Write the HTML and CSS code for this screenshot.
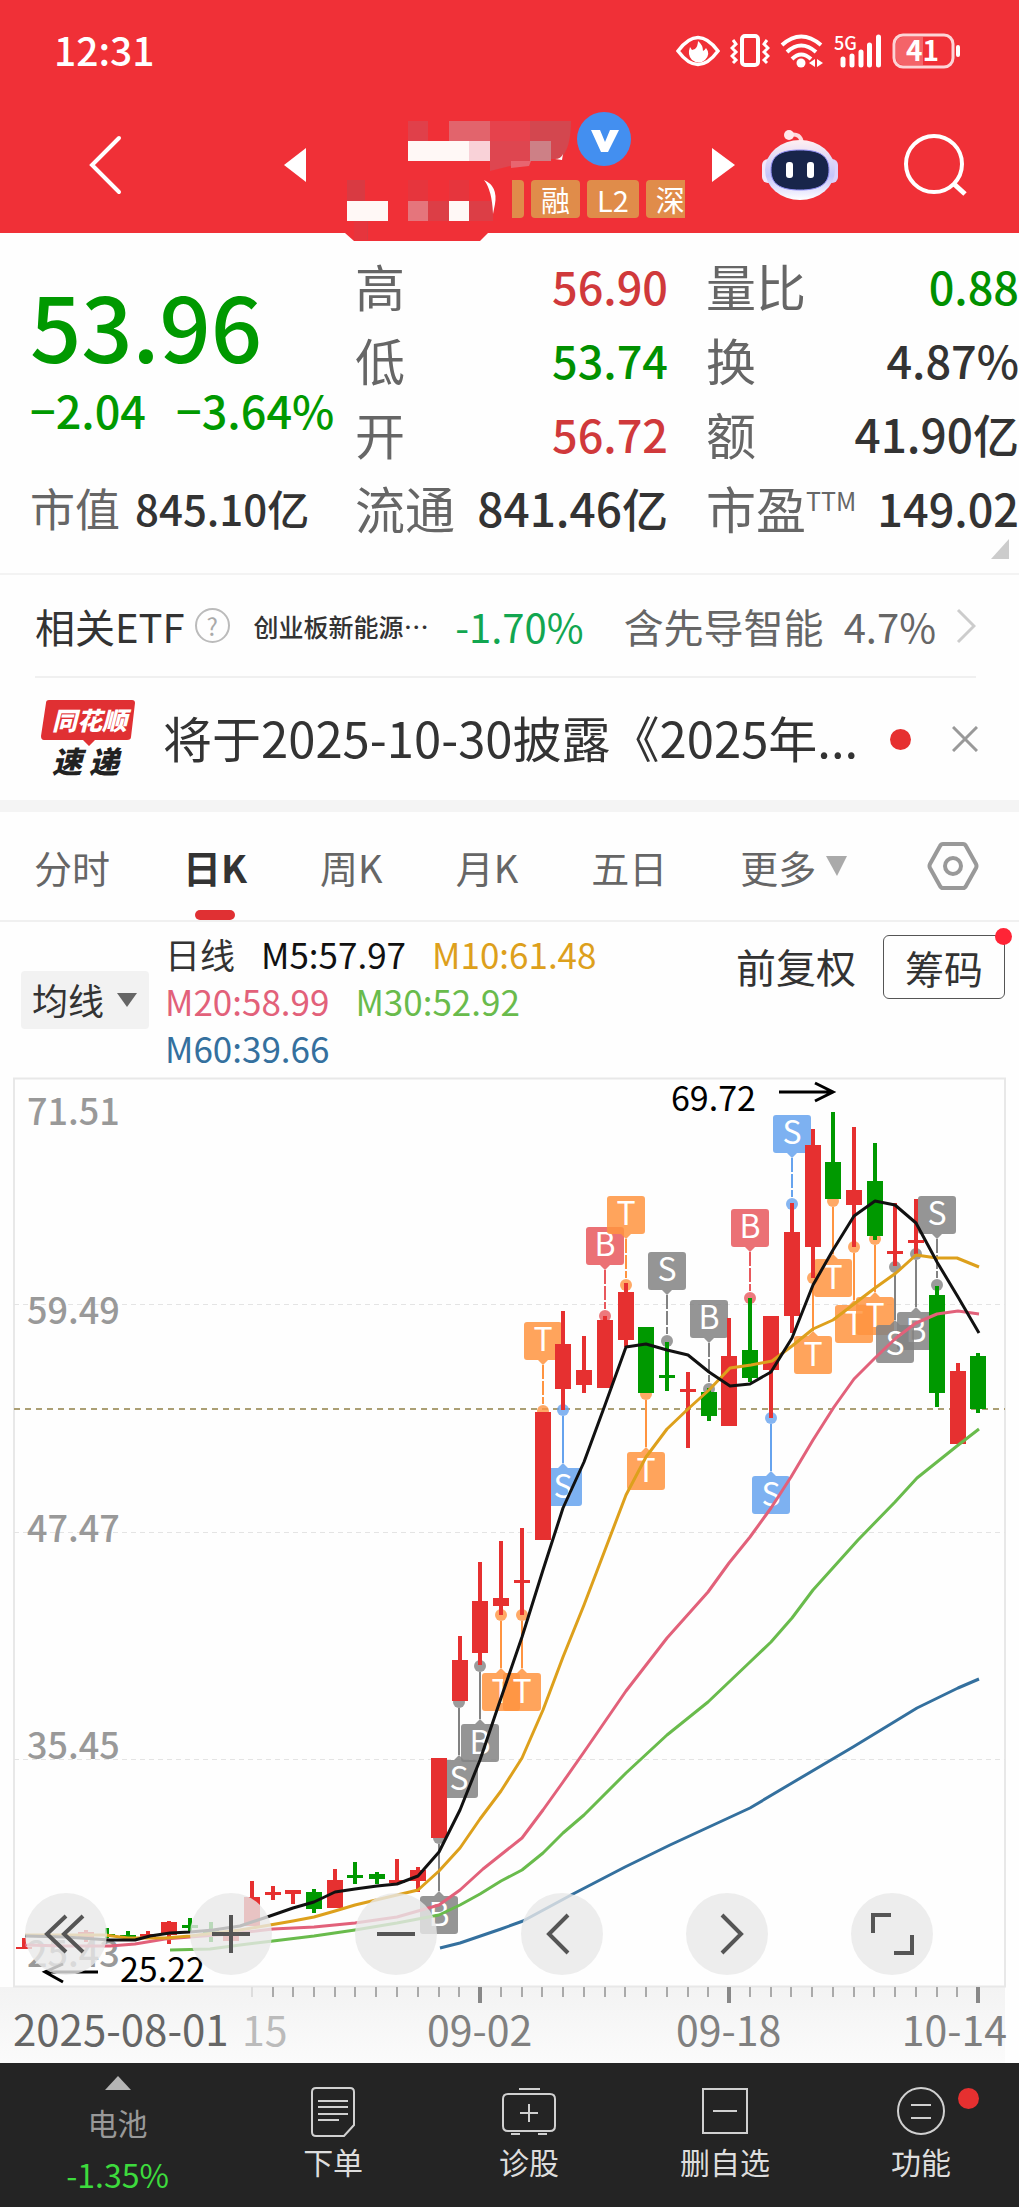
FILE: index.html
```html
<!DOCTYPE html>
<html lang="zh-CN">
<head>
<meta charset="utf-8">
<meta name="viewport" content="width=device-width, initial-scale=1">
<title>个股行情</title>
<link rel="stylesheet" href="styles.css">
</head>
<body>
<header class="header">
  <div class="status">
    <time class="status-time">12:31</time>
    <div class="status-icons">
      <svg width="44" height="36" viewBox="0 0 44 36"><path d="M2 18Q22-9 42 18Q22 45 2 18Z" fill="none" stroke="#fff" stroke-width="3.5"/><path d="M22 8q0 5-3 8l-3 1-2-3q-3 8 2 13 7 5 13 0 6-6 1-12-1 2-3 3 0-6-5-10z" fill="#fff"/></svg>
      <svg width="40" height="36" viewBox="0 0 40 36"><rect x="12" y="3" width="16" height="29" rx="3" fill="none" stroke="#fff" stroke-width="4"/><path d="M3 7l3 4-4 4 4 4-4 4 4 4-3 3M37 7l-3 4 4 4-4 4 4 4-4 4 3 3" fill="none" stroke="#fff" stroke-width="3"/></svg>
      <svg width="44" height="36" viewBox="0 0 44 36"><g fill="none" stroke="#fff" stroke-width="4"><path d="M2 12Q21-5 41 12"/><path d="M7 19Q21 6 36 19"/><path d="M12 26Q21 17 31 26"/></g><circle cx="21" cy="30" r="4.500" fill="#fff"/><path d="M35 26v8l-6-4zM37 26v8l6-4z" fill="#fff"/></svg>
      <svg class="signal" width="48" height="36" viewBox="0 0 48 36"><text class="net" x="0" y="17">5G</text><path d="M9 26v6M18 23v9M27 19v13M35.500 12v20M44.500 4v28" fill="none" stroke="#fff" stroke-width="5" stroke-linecap="round"/></svg>
      <svg width="70" height="36" viewBox="0 0 70 36"><rect x="2" y="2" width="59" height="32" rx="9" fill="none" stroke="#fff" stroke-opacity=".8" stroke-width="3"/><path d="M11 4h20v28H11q-7 0-7-7V11q0-7 7-7z" fill="#fff" opacity=".25"/><path d="M66 14v8" stroke="#fff" stroke-width="4" stroke-linecap="round"/><text class="battery" x="14" y="28">41</text></svg>
    </div>
  </div>
  <nav class="nav">
    <button class="icon-btn" aria-label="返回"><svg width="34" height="60" viewBox="0 0 34 60"><path d="M31 3L4 30l27 27" fill="none" stroke="#fff" stroke-width="4" stroke-linecap="round"/></svg></button>
    <button class="icon-btn prev" aria-label="上一只"><svg width="22" height="34" viewBox="0 0 22 34"><path d="M22 0v34L0 17z" fill="#fff"/></svg></button>
    <div class="stock">
      <div class="stock-name">
        <svg width="164" height="60" viewBox="408 112 164 60"><path fill="#e0404a" d="M408 121h20v20h-20z"/><path fill="#e2646c" d="M449 121h41v20h-41z"/><path fill="#e6424c" d="M490 121h40v20h-40z"/><path fill="#d3474f" d="M530 121h41q0 28-11 38h-30z"/><path fill="#fff8f6" d="M408 141h61v20h-61z"/><path fill="#f9d2d8" d="M469 141h21v20h-21z"/><path fill="#de4650" d="M490 141h40v20l-40 10z"/><path fill="#cd8086" d="M530 141h21v20h-21z"/><path fill="#e86570" d="M511 161h20l-2 5-18 2z"/><path fill="#fff" d="M555 159q6 0 8-5l-1 6z"/></svg>
        <svg width="54" height="54" viewBox="0 0 54 54"><circle cx="27" cy="27" r="27" fill="#438ff0"/><path d="M14 18h9l5 12 5-12h9L31 40h-7z" fill="#fff"/></svg>
      </div>
      <div class="stock-code">
        <svg class="code-mask" width="152" height="38" viewBox="345 180 152 38"><path fill="#f03037" d="M345 232v1l9 8h126l8-8v-1z"/><path fill="#d93a42" d="M347 180h18v21h-18zM365 221h3v19h-3z"/><path fill="#e6353d" d="M408 180h20v21h-20zM449 180h20v21h-20zM354 221h13v19h-13z"/><path fill="#fff8f6" d="M347 201h41v20h-41zM449 201h20v20h-20z"/><path fill="#e5757c" d="M408 201h20v20h-20z"/><path fill="#dc3e46" d="M428 201h21v20h-21zM469 201h24v20h-24z"/><path fill="#fff" d="M484 180q14 6 11 24l-2 10q-1-24-9-34z"/></svg>
        <ul class="tags"><li class="tag tag-cut"></li><li class="tag">融</li><li class="tag">L2</li><li class="tag">深</li></ul>
      </div>
    </div>
    <button class="icon-btn next" aria-label="下一只"><svg width="23" height="34" viewBox="0 0 23 34"><path d="M0 0v34l23-17z" fill="#fff"/></svg></button>
    <button class="icon-btn robot" aria-label="智能助手"><svg width="78" height="72" viewBox="0 0 78 72">
      <defs><linearGradient id="shell" x1="0" y1="0" x2="0" y2="1"><stop offset="0" stop-color="#fff0f2"/><stop offset=".6" stop-color="#c5c4fa"/><stop offset="1" stop-color="#fff"/></linearGradient></defs>
      <path d="M28 6q12-3 13 9" fill="none" stroke="#ffd9dd" stroke-width="4"/><circle cx="28" cy="6" r="5" fill="#ffe9ec"/>
      <rect x="1" y="30" width="12" height="24" rx="6" fill="#f3e8fb"/><rect x="65" y="30" width="12" height="24" rx="6" fill="#dcd2fb"/>
      <ellipse cx="39" cy="41" rx="35" ry="30" fill="url(#shell)"/><path d="M39 21c20 0 29 6 29 20s-9 20-29 20-29-6-29-20 9-20 29-20z" fill="#18254a" stroke="#8f8df2" stroke-width="1"/>
      <rect x="25" y="33" width="7" height="16" rx="3" fill="#fff"/><rect x="46" y="33" width="7" height="16" rx="3" fill="#fff"/></svg></button>
    <button class="icon-btn search" aria-label="搜索"><svg width="66" height="66" viewBox="0 0 66 66"><circle cx="31" cy="32" r="28" fill="none" stroke="#fff" stroke-width="4"/><path d="M51 52l11 10" stroke="#fff" stroke-width="5"/></svg></button>
  </nav>
</header>

<main>
  <section class="quote">
    <div class="quote-main">
      <div class="price-box">
        <strong class="price">53.96</strong>
        <p class="change"><span>−2.04</span><span>−3.64%</span></p>
      </div>
      <dl class="row small"><dt>市值</dt><dd>845.10亿</dd></dl>
    </div>
    <div class="quote-col">
      <dl class="row"><dt>高</dt><dd class="rise">56.90</dd></dl>
      <dl class="row"><dt>低</dt><dd class="fall">53.74</dd></dl>
      <dl class="row"><dt>开</dt><dd class="rise">56.72</dd></dl>
      <dl class="row"><dt>流通</dt><dd class="amount">841.46亿</dd></dl>
    </div>
    <div class="quote-col">
      <dl class="row"><dt>量比</dt><dd class="fall">0.88</dd></dl>
      <dl class="row"><dt>换</dt><dd>4.87%</dd></dl>
      <dl class="row"><dt>额</dt><dd class="amount">41.90亿</dd></dl>
      <dl class="row"><dt>市盈<span class="ttm">TTM</span></dt><dd>149.02</dd></dl>
    </div>
    <svg class="expand" width="18" height="20" viewBox="0 0 18 20"><path d="M18 0v20H0z" fill="#ccc"/></svg>
  </section>

  <section class="etf">
    <span class="etf-title">相关ETF</span>
    <button class="help" aria-label="说明">?</button>
    <a class="etf-name" href="#etf">创业板新能源<span>⋯</span></a>
    <span class="etf-rate">-1.70%</span>
    <span class="etf-hold">含先导智能</span>
    <span class="etf-share">4.7%</span>
    <svg width="20" height="36" viewBox="0 0 20 36"><path d="M2 2l16 16L2 34" fill="none" stroke="#ccc" stroke-width="3"/></svg>
  </section>

  <section class="news">
    <svg class="news-logo" width="94" height="78" viewBox="0 0 94 78"><path d="M8 0h83q3 0 3 3l-4 34q0 3-4 3H54l-6 6-6-6H3q-3 0-3-4L5 3q0-3 3-3z" fill="#e03033"/><text class="logo-top" x="11" y="30">同花顺</text><text class="logo-bottom" x="11" y="73">速</text><text class="logo-bottom" x="48" y="73">递</text></svg>
    <a class="news-text" href="#news">将于2025-10-30披露《2025年...</a>
    <i class="dot"></i>
    <button class="icon-btn close" aria-label="关闭"><svg width="26" height="26" viewBox="0 0 26 26"><path d="M1 1l24 24M25 1L1 25" stroke="#999" stroke-width="3"/></svg></button>
  </section>

  <nav class="tabs">
    <button class="tab">分时</button>
    <button class="tab active">日K</button>
    <button class="tab">周K</button>
    <button class="tab">月K</button>
    <button class="tab">五日</button>
    <button class="tab">更多<svg width="21" height="20" viewBox="0 0 21 20"><path d="M0 0h21L11 20z" fill="#aaa"/></svg></button>
    <button class="icon-btn settings" aria-label="设置"><svg width="52" height="50" viewBox="0 0 52 50"><path d="M16 3h20q2 0 3 2l10 18q1 2 0 4L39 45q-1 2-3 2H16q-2 0-3-2L3 27q-1-2 0-4L13 5q1-2 3-2z" fill="none" stroke="#999" stroke-width="4"/><circle cx="26" cy="25" r="8" fill="none" stroke="#999" stroke-width="4"/></svg></button>
  </nav>

  <section class="legend">
    <div class="picker">
      <select aria-label="指标"><option>均线</option></select>
      <svg width="20" height="14" viewBox="0 0 20 14"><path d="M0 0h20L10 14z" fill="#666"/></svg>
    </div>
    <ul class="averages">
      <li>日线</li><li class="m5">M5:57.97</li><li class="m10">M10:61.48</li><li class="m20">M20:58.99</li><li class="m30">M30:52.92</li><li class="m60">M60:39.66</li>
    </ul>
    <button class="adjust">前复权</button>
    <button class="chips">筹码<i class="badge"></i></button>
  </section>

  <section class="chart">
    <svg class="plot" viewBox="0 1077 1019 986">
      <defs>
        <g id="down"><path d="M0-46V-7" stroke="currentColor" stroke-width="2" stroke-dasharray="14 2"/><path d="M-16-89h32q3 0 3 3v32q0 3-3 3H5l-5 5-5-5h-11q-3 0-3-3v-32q0-3 3-3z" fill="currentColor" opacity=".85"/><circle r="6" fill="currentColor" opacity=".8"/></g>
        <g id="up"><path d="M0 6V53" stroke="currentColor" stroke-width="2"/><path d="M-16 96h32q3 0 3-3V61q0-3-3-3H5l-5-5-5 5h-11q-3 0-3 3v32q0 3 3 3z" fill="currentColor" opacity=".85"/><circle r="6" fill="currentColor" opacity=".8"/></g>
        <linearGradient id="axis" x1="0" y1="0" x2="0" y2="1"><stop offset="0" stop-color="#f3f3f3"/><stop offset="1" stop-color="#fbfbfb"/></linearGradient>
      </defs>
      <path d="M0 1987h1005v76H0z" fill="url(#axis)"/>
      <path d="M14 1078.500H1005V1986.500H14z" fill="none" stroke="#e8e8e8" stroke-width="2"/>
      <path d="M14 1304.500H1005M14 1532.500H1005M14 1759.500H1005" class="grid"/>
      <path d="M14 1409H1005" class="last"/>
      <g class="scale"><text x="27" y="1125">71.51</text><text x="27" y="1324">59.49</text><text x="27" y="1542">47.47</text><text x="27" y="1759">35.45</text><text x="27" y="1967">25.43</text></g>

      <g class="pin orange"><g transform="translate(543 1411)"><use href="#down"/><text y="-60">T</text></g></g>
      <g class="pin red"><g transform="translate(605 1316)"><use href="#down"/><text y="-60">B</text></g><g transform="translate(750 1298)"><use href="#down"/><text y="-60">B</text></g></g>
      <g class="pin orange"><g transform="translate(626 1285)"><use href="#down"/><text y="-60">T</text></g></g>
      <g class="pin gray"><g transform="translate(667 1341)"><use href="#down"/><text y="-60">S</text></g><g transform="translate(709 1389)"><use href="#down"/><text y="-60">B</text></g><g transform="translate(937 1285)"><use href="#down"/><text y="-60">S</text></g></g>
      <g class="pin blue"><g transform="translate(792 1204)"><use href="#down"/><text y="-60">S</text></g><g transform="translate(563 1410)"><use href="#up"/><text y="88">S</text></g><g transform="translate(771 1418)"><use href="#up"/><text y="88">S</text></g></g>
      <g class="pin orange"><g transform="translate(501 1615)"><use href="#up"/><text y="88">T</text></g><g transform="translate(522 1615)"><use href="#up"/><text y="88">T</text></g><g transform="translate(646 1394)"><use href="#up"/><text y="88">T</text></g><g transform="translate(813 1278)"><use href="#up"/><text y="88">T</text></g><g transform="translate(833 1201)"><use href="#up"/><text y="88">T</text></g><g transform="translate(854 1247)"><use href="#up"/><text y="88">T</text></g><g transform="translate(875 1239)"><use href="#up"/><text y="88">T</text></g></g>
      <g class="pin gray"><g transform="translate(439 1838)"><use href="#up"/><text y="88">B</text></g><g transform="translate(459 1702)"><use href="#up"/><text y="88">S</text></g><g transform="translate(480 1666)"><use href="#up"/><text y="88">B</text></g><g transform="translate(916 1254)"><use href="#up"/><text y="88">B</text></g><g transform="translate(895 1267)"><use href="#up"/><text y="88">S</text></g></g>

      <g class="rise-bars">
        <path class="wick" d="M24 1938v10M86 1930v12M148 1931v7M169 1921v23M231 1930v12M252 1881v45M273 1886v14M293 1891v13M335 1869v39M397 1859v23M418 1867v25M460 1636v60M480 1562v103M501 1541v74M522 1528v87M563 1311v99M584 1336v57M605 1316v50M626 1283v64M688 1372v76M729 1318v50M771 1330v88M792 1203v130M813 1129v149M854 1127v120M895 1203v63M916 1199v55M958 1363v20"/>
        <path class="body" d="M86 1932v7M169 1922v13M231 1931v10M252 1897v29M335 1880v28M418 1870v11M439 1758v80M460 1660v41M480 1601v52M501 1598v8M543 1412v128M563 1344v45M584 1370v15M605 1320v68M626 1292v48M729 1356v70M771 1316v54M792 1232v84M813 1145v102M854 1190v15M958 1371v73"/>
        <path class="body" d="M273 1892v3M293 1890v4M397 1880v3M522 1580v3M688 1389v3M895 1251v3M916 1240v3M148 1934v3M24 1947v2"/>
      </g>
      <g class="fall-bars">
        <path class="wick" d="M107 1928v10M128 1931v10M190 1918v13M211 1922v20M314 1889v24M355 1862v22M377 1872v12M667 1342v49M709 1388v33M750 1298v84M833 1112v60M875 1143v97M937 1286v121M978 1353v60"/>
        <path class="body" d="M107 1934v2M128 1935v2M190 1925v3M211 1930v3M314 1892v17M355 1875v3M377 1874v5M646 1327v66M667 1375v3M709 1392v24M750 1350v28M833 1162v37M875 1181v55M937 1295v98M978 1356v53"/>
      </g>
      <g class="lines">
        <path class="m60" d="M440 1948L460 1943 501 1929 523 1921 573 1894 625 1867 670 1845 750 1808 792 1783 853 1747 917 1708 958 1688 979 1679"/>
        <path class="m30" d="M170 1950L210 1949 240 1945 273 1941 314 1936 355 1930 397 1923 439 1915 460 1905 480 1894 501 1881 522 1870 543 1853 563 1833 584 1815 626 1773 667 1735 708 1702 750 1662 771 1642 792 1618 813 1590 858 1540 895 1502 917 1478 957 1446 979 1429"/>
        <path class="m20" d="M25 1945L65 1946 110 1946 135 1944 165 1939 190 1937 230 1934 273 1929 314 1927 355 1923 397 1917 439 1905 460 1890 483 1869 522 1838 543 1810 563 1782 584 1752 626 1691 667 1638 708 1592 729 1563 750 1537 771 1508 791 1477 813 1440 834 1407 854 1379 875 1358 896 1338 916 1323 937 1314 958 1311 979 1314"/>
        <path class="m10" d="M25 1935L105 1935 128 1938 165 1938 190 1936 240 1930 270 1925 293 1921 314 1917 335 1911 355 1905 397 1895 418 1890 439 1871 460 1848 480 1819 501 1791 522 1758 543 1710 563 1657 584 1605 605 1550 626 1495 646 1457 667 1429 688 1409 709 1390 730 1368 751 1365 772 1361 792 1346 813 1329 833 1320 854 1304 875 1288 896 1273 916 1255 937 1258 957 1258 979 1267"/>
        <path class="m5" d="M25 1936L65 1937 110 1940 135 1940 150 1936 170 1933 190 1932 213 1930 240 1926 270 1916 293 1908 314 1902 335 1892 355 1889 377 1886 397 1884 418 1876 439 1852 460 1810 480 1760 501 1698 522 1637 543 1570 563 1508 584 1462 605 1405 626 1347 646 1344 667 1350 688 1355 709 1372 730 1386 750 1384 771 1372 792 1338 813 1285 833 1250 854 1216 875 1201 895 1205 916 1223 937 1262 958 1297 979 1333"/>
      </g>
      <g class="extreme"><text x="671" y="1111">69.72</text><text x="120" y="1982">25.22</text><path d="M779 1092h53M815 1083l18 9-18 9M98 1972H46M63 1982l-18-10 18-8"/></g>
      <path class="tick" d="M273 1987v10M293 1987v10M314 1987v10M335 1987v10M355 1987v10M376 1987v10M397 1987v10M418 1987v10M439 1987v10M459 1987v10M501 1987v10M522 1987v10M542 1987v10M563 1987v10M584 1987v10M605 1987v10M625 1987v10M646 1987v10M667 1987v10M688 1987v10M708 1987v10M750 1987v10M771 1987v10M791 1987v10M812 1987v10M833 1987v10M854 1987v10M874 1987v10M895 1987v10M916 1987v10M937 1987v10M957 1987v10"/>
      <path class="tick first" d="M252 1987v10"/>
      <path class="tick major" d="M480 1987v16M729 1987v16M978 1987v16"/>
      <g class="dates"><text class="past" x="242" y="2046">15</text><text class="start" x="13" y="2046">2025-08-01</text><text x="427" y="2046">09-02</text><text x="676" y="2046">09-18</text><text x="1007" y="2046" text-anchor="end">10-14</text></g>
    </svg>
    <div class="controls">
      <button aria-label="最早"><svg viewBox="0 0 82 82"><path d="M41 23L22 41l19 18M58 23L39 41l19 18"/></svg></button>
      <button aria-label="放大"><svg viewBox="0 0 82 82"><path d="M41 22v38M22 41h38"/></svg></button>
      <button aria-label="缩小"><svg viewBox="0 0 82 82"><path d="M22 41h38"/></svg></button>
      <button aria-label="左移"><svg viewBox="0 0 82 82"><path d="M47 22L28 41l19 19"/></svg></button>
      <button aria-label="右移"><svg viewBox="0 0 82 82"><path d="M36 22l19 19-19 19"/></svg></button>
      <button aria-label="全屏"><svg viewBox="0 0 82 82"><path d="M22 40V22h18M43 60h18V42"/></svg></button>
    </div>
  </section>
</main>

<footer class="toolbar">
  <a class="tool sector" href="#sector"><svg width="26" height="14" viewBox="0 0 26 14"><path d="M13 0l13 14H0z" fill="#b5b5b5"/></svg><span>电池</span><span class="sector-rate">-1.35%</span></a>
  <a class="tool" href="#order"><svg width="54" height="52" viewBox="0 0 54 52"><path d="M10 2h34q4 0 4 4v33L38 50H10q-4 0-4-4V6q0-4 4-4zM12 15h30M12 21h30M12 28h30M12 34h21"/></svg><span>下单</span></a>
  <a class="tool" href="#diagnose"><svg width="54" height="52" viewBox="0 0 54 52"><path d="M6 8h42q5 0 5 5v27q0 5-5 5H6q-5 0-5-5V13q0-5 5-5zM17 3h21M27 18v18M18 27h18M9 48h9M36 48h9"/></svg><span>诊股</span></a>
  <a class="tool" href="#remove"><svg width="54" height="52" viewBox="0 0 54 52"><path d="M5 3h44v44H5zM15 25h24"/></svg><span>删自选</span></a>
  <a class="tool" href="#more"><span class="icon-wrap"><svg width="54" height="52" viewBox="0 0 54 52"><circle cx="27" cy="25" r="23"/><path d="M17 19h20M17 32h20"/></svg><i class="dot"></i></span><span>功能</span></a>
</footer>
</body>
</html>
```
FILE: styles.css
```css
* { box-sizing: border-box; }

body {
  margin: 0;
  background: #fefefe;
  color: #333;
  font-family: "Noto Sans CJK SC", "Noto Sans", sans-serif;
}

dl, dd, ul, p { margin: 0; padding: 0; }
ul { list-style: none; }
a { color: inherit; text-decoration: none; }
svg { display: block; flex: none; }

button, select {
  margin: 0;
  padding: 0;
  border: 0;
  background: none;
  color: inherit;
  font: inherit;
}

/* header */
.header {
  position: relative;
  z-index: 1;
  background: #f03037;
  color: #fff;
}

.status {
  display: flex;
  align-items: center;
  justify-content: space-between;
  height: 102px;
  padding: 0 57px 0 54px;
}

.status-time { padding-bottom: 4px; font-size: 39px; font-weight: 500; }
.status-icons { display: flex; align-items: center; gap: 10px; }
.signal { overflow: visible; }
.net { fill: #fff; font-size: 18px; font-weight: 500; }
.battery { fill: #fff; font-size: 28px; font-weight: 700; }

.nav {
  display: flex;
  align-items: center;
  height: 131px;
  padding: 0 50px 6px 88px;
}

.prev { margin-left: auto; }

.stock {
  display: flex;
  flex-direction: column;
  gap: 8px;
  width: 340px;
  margin: 0 27px 0 39px;
}

.stock-name {
  display: flex;
  gap: 5px;
  padding-left: 63px;
}

.stock-code {
  display: flex;
  justify-content: space-between;
}

.code-mask { overflow: visible; }

.tags {
  display: flex;
  gap: 7px;
  width: 173px;
  overflow: hidden;
}

.tag {
  flex: none;
  padding: 0 10px;
  border-radius: 4px;
  background: #e08c4a;
  font-size: 29px;
  line-height: 38px;
}

.tag-cut {
  width: 12px;
  padding: 0;
  border-radius: 0 4px 4px 0;
}

.robot { margin-left: 26px; }
.search { margin-left: 64px; }

/* quote */
.quote {
  position: relative;
  display: grid;
  grid-template-columns: 317px 1fr 1fr;
  column-gap: 38px;
  padding: 15px 0 29px;
  border-bottom: 2px solid #f3f3f3;
}

.quote-main { padding-left: 30px; }

.price-box {
  height: 222px;
  padding-top: 17px;
  color: #009900;
  white-space: nowrap;
}

.price {
  display: block;
  font-size: 90px;
  font-weight: 500;
  line-height: 118px;
}

.change {
  display: flex;
  gap: 30px;
  font-size: 45px;
  font-weight: 500;
  line-height: 54px;
}

.row {
  display: flex;
  align-items: center;
  justify-content: space-between;
  height: 74px;
  white-space: nowrap;
}

.row dt { color: #666; font-size: 50px; }
.row dd { font-size: 45px; font-weight: 500; }
.row .amount { font-size: 46px; }
.row.small { justify-content: flex-start; gap: 15px; }
.row.small dt { font-size: 45px; }
.row.small dd { font-size: 42px; }
.row .rise { color: #d0393b; }
.row .fall { color: #009000; }

.ttm {
  font-size: 25px;
  vertical-align: 18px;
  line-height: 1;
}

.expand {
  position: absolute;
  right: 10px;
  bottom: 14px;
}

/* related ETF */
.etf {
  display: flex;
  align-items: center;
  height: 103px;
  margin: 0 43px 0 35px;
  border-bottom: 2px solid #f0f0f0;
  font-size: 40px;
  white-space: nowrap;
}

.help {
  width: 35px;
  height: 35px;
  margin: 0 24px 0 10px;
  border: 2px solid #bbb;
  border-radius: 50%;
  color: #aaa;
  font-size: 24px;
  line-height: 30px;
}

.etf-name { font-size: 25px; font-weight: 500; }
.etf-rate { margin-left: auto; color: #12a650; }
.etf-hold { margin-left: 40px; color: #666; }
.etf-share { margin: 0 20px; color: #666; }

/* news */
.news {
  display: flex;
  align-items: center;
  height: 134px;
  padding: 0 41px;
  border-bottom: 12px solid #f4f4f4;
}

.news-logo { margin-right: 28px; }
.logo-top { fill: #fff; font-size: 25px; font-weight: 900; font-style: italic; }
.logo-bottom { fill: #222; font-size: 30px; font-weight: 900; font-style: italic; }
.news-text { padding-bottom: 6px; font-size: 49px; white-space: nowrap; }

.dot {
  width: 21px;
  height: 21px;
  margin-left: auto;
  border-radius: 50%;
  background: #e63030;
}

.close { margin-left: 41px; }

/* period tabs */
.tabs {
  display: flex;
  align-items: center;
  gap: 73px;
  height: 110px;
  padding: 0 40px 0 34px;
  border-bottom: 2px solid #f0f0f0;
  color: #666;
  font-size: 38px;
}

.tab {
  position: relative;
  display: flex;
  align-items: center;
  gap: 10px;
  height: 108px;
}

.active { color: #333; font-weight: 700; }

.active::after {
  content: "";
  position: absolute;
  bottom: 0;
  left: 50%;
  width: 40px;
  height: 10px;
  margin-left: -20px;
  border-radius: 5px;
  background: #e03033;
}

.settings { margin-left: auto; }

/* moving averages */
.legend {
  display: flex;
  align-items: flex-start;
  height: 155px;
  padding: 8px 14px 0 21px;
}

.picker {
  position: relative;
  margin-top: 41px;
}

.picker select {
  width: 128px;
  height: 58px;
  padding: 0 0 2px 11px;
  border-radius: 4px;
  background: #f2f2f2;
  font-size: 36px;
  appearance: none;
}

.picker svg {
  position: absolute;
  top: 22px;
  right: 12px;
  pointer-events: none;
}

.averages {
  display: flex;
  flex-wrap: wrap;
  gap: 0 26px;
  width: 470px;
  margin-left: 16px;
  font-size: 35px;
  line-height: 47px;
}

.m5 { color: #111; stroke: #111; }
.m10 { color: #dda01c; stroke: #dda01c; }
.m20 { color: #e2617a; stroke: #e2617a; }
.m30 { color: #69bb4c; stroke: #69bb4c; }
.m60 { color: #34709e; stroke: #34709e; }

.adjust {
  margin-left: auto;
  font-size: 40px;
  line-height: 72px;
}

.chips {
  position: relative;
  width: 122px;
  height: 64px;
  margin: 5px 0 0 27px;
  border: 1px solid #555;
  border-radius: 6px;
  font-size: 39px;
  line-height: 60px;
}

.badge {
  position: absolute;
  top: -8px;
  right: -8px;
  width: 17px;
  height: 17px;
  border-radius: 50%;
  background: #ff2436;
}

/* chart */
.chart { position: relative; }
.plot { width: 100%; height: auto; }
.grid { fill: none; stroke: #e4e4e4; stroke-dasharray: 5 4; }
.last { fill: none; stroke: #ab9f74; stroke-width: 2; stroke-dasharray: 6 5; }
.scale { fill: #999; font-size: 36px; font-weight: 500; }
.rise-bars { stroke: #e63030; }
.fall-bars { stroke: #009900; }
.wick { stroke-width: 4; }
.body { stroke-width: 16; }
.lines { fill: none; stroke-width: 3; stroke-linejoin: round; }

.pin text {
  fill: #fff;
  font-size: 32px;
  text-anchor: middle;
}

.orange { color: #ff9440; }
.red { color: #e8585d; }
.gray { color: #828282; }
.blue { color: #66a3ee; }

.extreme { fill: #000; font-size: 34px; }
.extreme path { fill: none; stroke: #000; stroke-width: 3; }
.tick { stroke: #aaa; stroke-width: 2; }
.first { stroke: #ddd; }
.major { stroke: #888; stroke-width: 4; }
.dates { fill: #808080; font-size: 41px; }
.dates .start { fill: #666; font-size: 42px; }
.dates .past { fill: #bbb; }

.controls {
  position: absolute;
  right: 86px;
  bottom: 88px;
  left: 25px;
  display: flex;
  justify-content: space-between;
}

.controls button {
  width: 82px;
  height: 82px;
  border-radius: 50%;
  background: rgba(233, 233, 233, .8);
}

.controls path { fill: none; stroke: #555; stroke-width: 4; }

/* bottom toolbar */
.toolbar {
  display: grid;
  grid-template-columns: 6fr 5fr 5fr 5fr 5fr;
  height: 144px;
  background: #242424;
  color: #ddd;
  font-size: 30px;
  line-height: 40px;
}

.tool {
  display: flex;
  flex-direction: column;
  align-items: center;
  gap: 3px;
  padding-top: 23px;
}

.tool path, .tool circle { fill: none; stroke: #d0d0d0; stroke-width: 2; }
.sector { gap: 12px; padding-top: 13px; color: #999; }
.sector path { fill: #b5b5b5; stroke: none; }
.sector-rate { color: #3ddb3d; font-size: 32px; }
.icon-wrap { position: relative; }

.icon-wrap .dot {
  position: absolute;
  top: 2px;
  right: -31px;
}
```
